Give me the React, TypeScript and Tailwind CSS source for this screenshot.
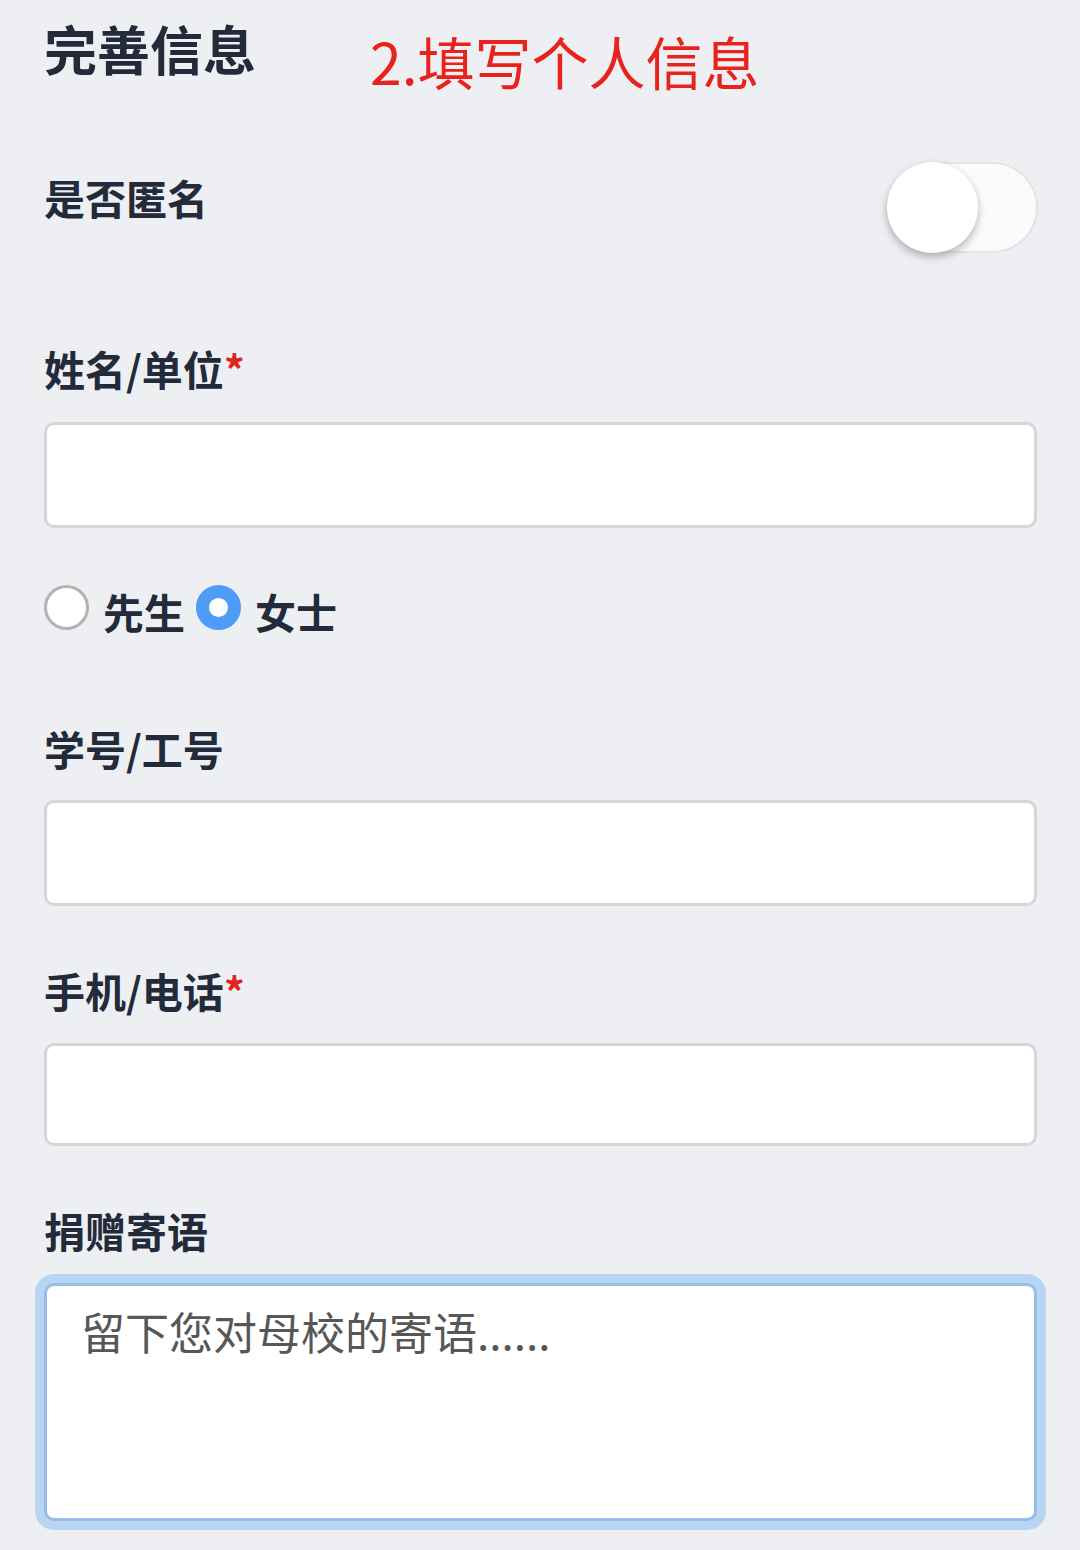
import React, { useState } from 'react';

const font = { fontFamily: '"Noto Sans CJK SC", "Noto Sans", sans-serif' };

const Label: React.FC<{ text: string; required?: boolean; className?: string }> = ({ text, required, className }) => (
  <div className={`text-[41px] leading-[41px] font-bold text-[#232a3a] ${className ?? ''}`}>
    {text}
    {required && <span className="text-[#e0231c]">*</span>}
  </div>
);

const Field: React.FC<{ className?: string; h: string }> = ({ className, h }) => (
  <input
    type="text"
    className={`w-full ${h} rounded-[10px] border-[3px] border-[#d4d6da] bg-white px-9 text-[40px] outline-none ${className ?? ''}`}
  />
);

export default function App() {
  const [anon, setAnon] = useState(false);
  const [gender, setGender] = useState<'m' | 'f'>('f');

  return (
    <div className="min-h-[1550px] w-[1080px] bg-[#edeff2] px-[44px] pr-[43px]" style={font}>
      {/* header */}
      <div className="flex items-start">
        <h1 className="mt-[22px] text-[53px] leading-[53px] font-bold text-[#232a3a]">完善信息</h1>
        <div className="ml-[114px] mt-[32px] text-[57px] leading-[57px] text-[#e8231d]">2.填写个人信息</div>
      </div>

      {/* anonymous toggle */}
      <div className="mt-[73px] flex items-start justify-between">
        <Label text="是否匿名" className="mt-[15px]" />
        <button
          onClick={() => setAnon(!anon)}
          className={`relative -mr-[1px] h-[91px] w-[151px] rounded-full border-2 border-[#e3e4e6] ${anon ? 'bg-[#4d9cf5]' : 'bg-[#fbfbfb]'}`}
        >
          <span
            className={`absolute top-[-2px] h-[91px] w-[91px] rounded-full bg-white shadow-[0_4px_8px_rgba(0,0,0,0.28)] ${anon ? 'left-[58px]' : 'left-[-2px]'}`}
          />
        </button>
      </div>

      <Label text="姓名/单位" required className="mt-[95px]" />
      <Field className="mt-[33px]" h="h-[106px]" />

      {/* gender */}
      <div className="mt-[57px] flex h-[45px] items-center text-[41px] leading-[45px] font-bold text-[#232a3a]">
        <button
          onClick={() => setGender('m')}
          className={`h-[45px] w-[45px] rounded-full bg-white ${gender === 'm' ? 'border-[13px] border-[#4d9cf5]' : 'border-[3px] border-[#b3b3b3]'}`}
        />
        <span className="relative top-[4px] ml-[14px]">先生</span>
        <button
          onClick={() => setGender('f')}
          className={`ml-[11px] h-[45px] w-[45px] rounded-full bg-white ${gender === 'f' ? 'border-[13px] border-[#4d9cf5]' : 'border-[3px] border-[#b3b3b3]'}`}
        />
        <span className="relative top-[4px] ml-[14px]">女士</span>
      </div>

      <Label text="学号/工号" className="mt-[98px]" />
      <Field className="mt-[31px]" h="h-[106px]" />

      <Label text="手机/电话" required className="mt-[64px]" />
      <Field className="mt-[32px]" h="h-[103px]" />

      <Label text="捐赠寄语" className="mt-[64px]" />
      <textarea
        placeholder="留下您对母校的寄语......"
        className="mt-[32px] block h-[238px] w-full resize-none rounded-[10px] border-[3px] border-[#96bde6] bg-white px-[34px] pt-[18px] text-[44px] leading-[54px] text-[#333] shadow-[0_0_0_9px_#b8d5f4] outline-none placeholder:text-[#575757]"
      />
    </div>
  );
}
